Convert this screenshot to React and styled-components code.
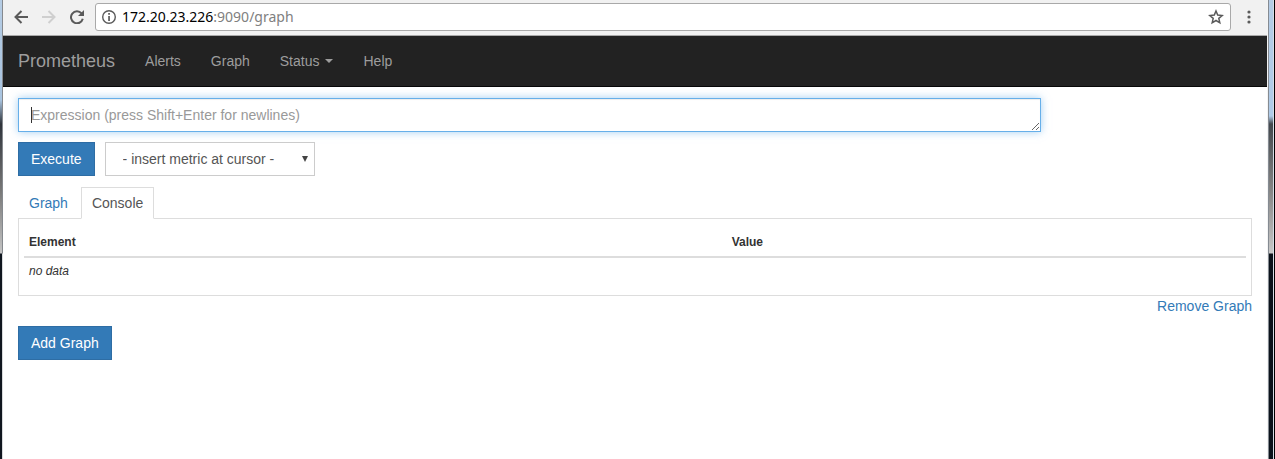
import React from 'react';
import styled, { createGlobalStyle } from 'styled-components';

const GlobalStyle = createGlobalStyle`
  *, *::before, *::after { box-sizing: border-box; }
  body {
    margin: 0;
    background: #fff;
    color: #333;
    font-family: "Liberation Sans", Arial, sans-serif;
    font-size: 14px;
    line-height: 20px;
  }
  button, input, textarea, select { font: inherit; margin: 0; border-radius: 0; }
  a { color: #337ab7; text-decoration: none; }
`;

const Desktop = styled.div`
  display: grid;
  grid-template-columns: 3px minmax(0, 1fr) 1px 7px;
  min-height: 100vh;
`;

const LeftEdge = styled.div`
  background: linear-gradient(#b5cce4 0, #a9c4e0 100px, #2f343b 124px, #777 190px, #c4c4c4 253px, #10161f 254px, #10161f 100%);
  &::after {
    content: "";
    display: block;
    width: 1px;
    height: 100%;
    margin-left: auto;
    background: linear-gradient(#85898e 0, #85898e 253px, #d8dadc 254px);
  }
`;

const InnerEdge = styled.div`
  background: #f4f4f4;
`;

const RightEdge = styled.div`
  border-left: 1px solid #858b92;
  border-right: 1px solid #000;
  background: linear-gradient(#b5cce6 0, #b0cbe8 116px, #43484d 124px, #858585 190px, #c8c8c8 253px, #0c131b 254px, #0c131b 100%);
  &::after {
    content: "";
    display: block;
    width: 1px;
    height: 100%;
    margin-left: auto;
    background: #d5dde6;
  }
`;

const BrowserBar = styled.header`
  display: flex;
  align-items: center;
  height: 36px;
  padding: 0 0 2px 8px;
  background: #f1f1f1;
  border-bottom: 1px solid #a9a9a9;
`;

const IconButton = styled.button`
  display: flex;
  align-items: center;
  justify-content: center;
  flex: none;
  width: ${(p) => p.$width || 28}px;
  height: 28px;
  padding: 0;
  border: 0;
  background: none;
  color: ${(p) => (p.$faded ? '#cfcfcf' : '#5a5a5a')};
`;

const AddressBox = styled.div`
  display: flex;
  align-items: center;
  flex: 1;
  height: 28px;
  margin-left: 8px;
  padding-left: 5px;
  background: #fff;
  border: 1px solid #a9a9a9;
  border-radius: 3px;
  color: #5a5a5a;
`;

const Address = styled.div`
  flex: 1;
  padding-left: 5px;
  font-family: "Noto Sans", sans-serif;
  font-size: 14px;
  color: #808080;
`;

const Host = styled.span`
  color: #000;
`;

const Navbar = styled.nav`
  display: flex;
  align-items: center;
  height: 51px;
  background: #222;
  border-bottom: 1px solid #080808;
`;

const Brand = styled.a`
  padding: 0 15px;
  font-size: 18px;
  color: #9d9d9d;
`;

const NavLink = styled.a`
  display: flex;
  align-items: center;
  padding: 0 15px;
  color: #9d9d9d;
`;

const Caret = styled.span`
  margin-left: 6px;
  border-top: 4px solid;
  border-left: 4px solid transparent;
  border-right: 4px solid transparent;
`;

const Content = styled.main`
  padding: 11px 15px 0;
`;

const ExpressionField = styled.div`
  position: relative;
  width: calc((100% + 30px) * 10 / 12 - 30px);
  &::after {
    content: "";
    position: absolute;
    left: 13px;
    top: 9px;
    width: 1px;
    height: 16px;
    background: #333;
  }
`;

const Expression = styled.textarea`
  display: block;
  width: 100%;
  height: 34px;
  padding: 6px 12px;
  border: 1px solid #66afe9;
  outline: 0;
  overflow: hidden;
  resize: vertical;
  color: #555;
  box-shadow: inset 0 1px 1px rgba(0, 0, 0, 0.075), 0 0 8px rgba(102, 175, 233, 0.6);
  &::placeholder { color: #999; opacity: 1; }
`;

const Controls = styled.div`
  display: flex;
  gap: 10px;
  margin: 10px 0 11px;
`;

const PrimaryButton = styled.button`
  height: 34px;
  padding: 0 12px;
  border: 1px solid #2e6da4;
  background: #337ab7;
  color: #fff;
`;

const SelectBox = styled.div`
  position: relative;
  width: 210px;
  &::after {
    content: "";
    position: absolute;
    right: 7px;
    top: 14px;
    border-top: 6px solid #444;
    border-left: 3px solid transparent;
    border-right: 3px solid transparent;
    pointer-events: none;
  }
`;

const MetricSelect = styled.select`
  width: 100%;
  height: 34px;
  padding: 0 17px;
  appearance: none;
  border: 1px solid #ccc;
  background: #fff;
  color: #555;
`;

const Tabs = styled.div`
  display: flex;
  margin-bottom: -1px;
`;

const Tab = styled.a`
  position: relative;
  height: 32px;
  padding: 5px 10px;
  margin-right: 2px;
  border: 1px solid ${(p) => (p.$active ? '#ddd' : 'transparent')};
  border-bottom-color: ${(p) => (p.$active ? '#fff' : 'transparent')};
  color: ${(p) => (p.$active ? '#555' : '#337ab7')};
`;

const Panel = styled.section`
  padding: 10px 5px;
  border: 1px solid #ddd;
`;

const ResultTable = styled.table`
  width: 100%;
  table-layout: fixed;
  border-collapse: collapse;
  font-size: 12px;
  line-height: 17px;
  text-align: left;
`;

const HeadCell = styled.th`
  width: ${(p) => p.$width || 'auto'};
  padding: 5px;
  border-bottom: 2px solid #ddd;
`;

const Cell = styled.td`
  padding: 5px;
  font-style: italic;
`;

const PanelActions = styled.div`
  display: flex;
  justify-content: flex-end;
  margin-bottom: 10px;
`;

const BackIcon = () => (
  <svg width="14" height="14" viewBox="0 0 14 14" fill="none" stroke="currentColor" strokeWidth="2">
    <path d="M14 7H1.5M7.5 1L1.5 7l6 6" />
  </svg>
);

const ForwardIcon = () => (
  <svg width="14" height="14" viewBox="0 0 14 14" fill="none" stroke="currentColor" strokeWidth="2">
    <path d="M0 7h12.5M6.5 1l6 6-6 6" />
  </svg>
);

const ReloadIcon = () => (
  <svg width="14" height="14" viewBox="0 0 14 14">
    <path d="M11.6 3.4A6 6 0 1 0 12.8 8.8" fill="none" stroke="currentColor" strokeWidth="2" />
    <path d="M14 0v6H8z" fill="currentColor" />
  </svg>
);

const InfoIcon = () => (
  <svg width="16" height="16" viewBox="0 0 16 16">
    <circle cx="8" cy="8" r="6.3" fill="none" stroke="currentColor" strokeWidth="1.4" />
    <path d="M7.2 4h1.7v1.7H7.2zM7.2 7h1.7v5H7.2z" fill="currentColor" />
  </svg>
);

const StarIcon = () => (
  <svg width="16" height="16" viewBox="0 0 16 16" fill="none" stroke="currentColor" strokeWidth="1.5">
    <path d="M8 2l1.7 4.1 4.5.4-3.4 2.9 1 4.4L8 11.5l-3.8 2.3 1-4.4L1.8 6.5l4.5-.4z" />
  </svg>
);

const MenuIcon = () => (
  <svg width="4" height="14" viewBox="0 0 4 14" fill="currentColor">
    <circle cx="2" cy="2" r="1.6" />
    <circle cx="2" cy="7" r="1.6" />
    <circle cx="2" cy="12" r="1.6" />
  </svg>
);

export default function App() {
  return (
    <>
      <GlobalStyle />
      <Desktop>
        <LeftEdge />
        <div>
          <BrowserBar>
            <IconButton $width={20} aria-label="Back"><BackIcon /></IconButton>
            <IconButton $width={36} $faded aria-label="Forward"><ForwardIcon /></IconButton>
            <IconButton $width={20} aria-label="Reload"><ReloadIcon /></IconButton>
            <AddressBox>
              <InfoIcon />
              <Address><Host>172.20.23.226</Host>:9090/graph</Address>
              <IconButton aria-label="Bookmark this page"><StarIcon /></IconButton>
            </AddressBox>
            <IconButton $width={36} aria-label="Menu"><MenuIcon /></IconButton>
          </BrowserBar>
          <Navbar>
            <Brand href="#">Prometheus</Brand>
            <NavLink href="#alerts">Alerts</NavLink>
            <NavLink href="#graph">Graph</NavLink>
            <NavLink href="#status">Status<Caret /></NavLink>
            <NavLink href="#help">Help</NavLink>
          </Navbar>
          <Content>
            <ExpressionField>
              <Expression
                rows={1}
                aria-label="Expression"
                placeholder="Expression (press Shift+Enter for newlines)"
              />
            </ExpressionField>
            <Controls>
              <PrimaryButton>Execute</PrimaryButton>
              <SelectBox>
                <MetricSelect aria-label="Metric">
                  <option>- insert metric at cursor -</option>
                </MetricSelect>
              </SelectBox>
            </Controls>
            <Tabs>
              <Tab href="#graph-tab">Graph</Tab>
              <Tab href="#console-tab" $active>Console</Tab>
            </Tabs>
            <Panel>
              <ResultTable>
                <thead>
                  <tr>
                    <HeadCell $width="57.5%">Element</HeadCell>
                    <HeadCell>Value</HeadCell>
                  </tr>
                </thead>
                <tbody>
                  <tr>
                    <Cell colSpan={2}>no data</Cell>
                  </tr>
                </tbody>
              </ResultTable>
            </Panel>
            <PanelActions>
              <a href="#remove">Remove Graph</a>
            </PanelActions>
            <PrimaryButton>Add Graph</PrimaryButton>
          </Content>
        </div>
        <InnerEdge />
        <RightEdge />
      </Desktop>
    </>
  );
}
